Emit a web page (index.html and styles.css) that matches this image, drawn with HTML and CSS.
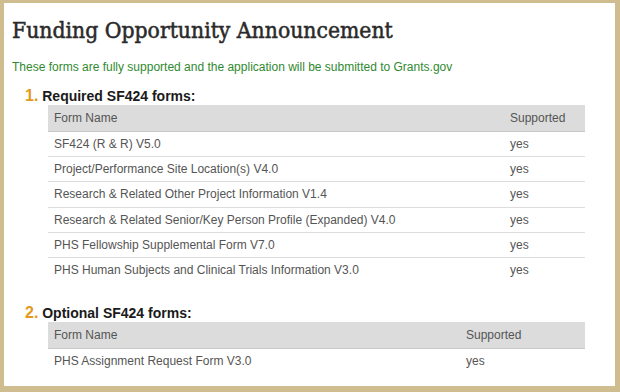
FILE: index.html
```html
<!DOCTYPE html>
<html lang="en">
<head>
  <meta charset="UTF-8">
  <title>Funding Opportunity Announcement</title>
  <link rel="stylesheet" href="styles.css">
</head>
<body>

  <div class="panel">
    <h1 class="page-title">Funding Opportunity Announcement</h1>
    <p class="notice">These forms are fully supported and the application will be submitted to Grants.gov</p>

    <div class="form-group">
      <div class="group-title"><span class="num">1.</span> Required SF424 forms:</div>
      <table class="forms-table required">
        <thead>
          <tr><th class="name-col">Form Name</th><th>Supported</th></tr>
        </thead>
        <tbody>
          <tr><td>SF424 (R &amp; R) V5.0</td><td>yes</td></tr>
          <tr><td>Project/Performance Site Location(s) V4.0</td><td>yes</td></tr>
          <tr><td>Research &amp; Related Other Project Information V1.4</td><td>yes</td></tr>
          <tr><td>Research &amp; Related Senior/Key Person Profile (Expanded) V4.0</td><td>yes</td></tr>
          <tr><td>PHS Fellowship Supplemental Form V7.0</td><td>yes</td></tr>
          <tr><td>PHS Human Subjects and Clinical Trials Information V3.0</td><td>yes</td></tr>
        </tbody>
      </table>
    </div>

    <div class="form-group">
      <div class="group-title"><span class="num">2.</span> Optional SF424 forms:</div>
      <table class="forms-table optional">
        <thead>
          <tr><th class="name-col">Form Name</th><th>Supported</th></tr>
        </thead>
        <tbody>
          <tr><td>PHS Assignment Request Form V3.0</td><td>yes</td></tr>
        </tbody>
      </table>
    </div>
  </div>

</body>
</html>
```

FILE: styles.css
```css
html, body {
  height: 100%;
}
body {
  margin: 0;
  background: #cfbd8f;
  font-family: "Liberation Sans", Arial, sans-serif;
  color: #555;
  padding: 3px 5px 6px 4px;
  box-sizing: border-box;
}
.panel {
  background: #ffffff;
  height: 100%;
  padding: 11px 8px 0 8px;
  box-sizing: border-box;
}
.page-title {
  font-family: "DejaVu Serif Condensed", "DejaVu Serif", serif;
  font-weight: normal;
  font-size: 22.7px;
  color: #2a2a2a;
  -webkit-text-stroke: 0.5px #2a2a2a;
  margin: 0;
  line-height: 32px;
}
.notice {
  color: #2f8a2f;
  font-size: 12px;
  margin: 14px 0 0 0;
}
.form-group {
  margin-top: 13px;
  padding-left: 13px;
}
.form-group + .form-group {
  margin-top: 22px;
}
.group-title {
  font-size: 14px;
  font-weight: bold;
  color: #1a1a1a;
  line-height: 17px;
}
.num {
  color: #e39a1c;
  font-size: 16px;
}
.forms-table {
  margin-left: 23px;
  width: 537px;
  border-collapse: collapse;
  font-size: 12px;
}
.forms-table th {
  background: #dcdcdc;
  font-weight: normal;
  text-align: left;
  color: #555;
  height: 26px;
  padding: 0 6px;
  border-bottom: 1px solid #c8c8c8;
}
.forms-table td {
  height: 24.2px;
  padding: 0 6px;
  border-bottom: 1px solid #dddddd;
}
.forms-table tbody tr:last-child td {
  border-bottom: none;
}
.required .name-col {
  width: 444px;
}
.optional .name-col {
  width: 400px;
}
```
